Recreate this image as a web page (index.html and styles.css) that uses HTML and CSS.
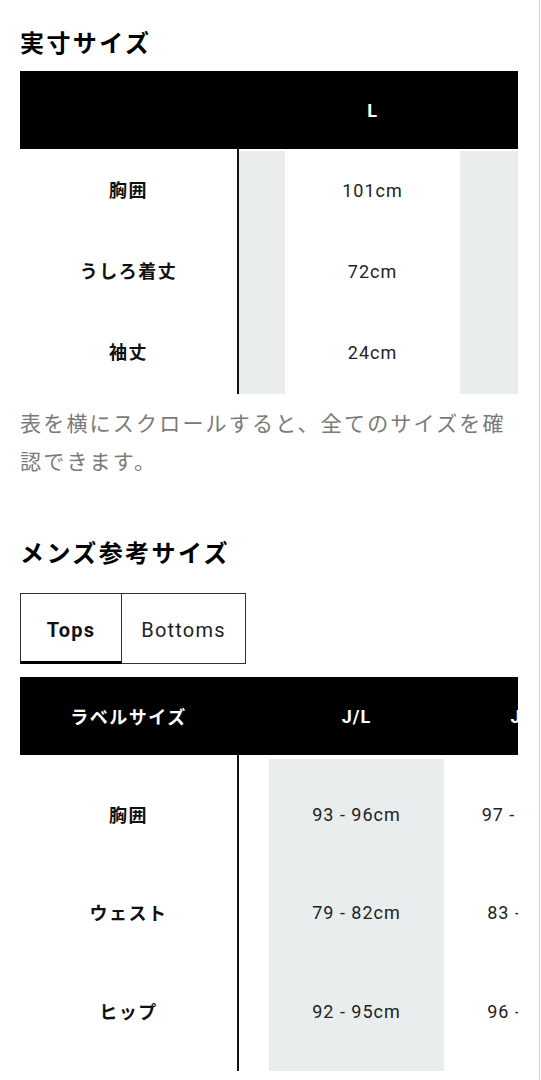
FILE: index.html
```html
<!DOCTYPE html>
<html lang="ja">
<head>
<meta charset="utf-8">
<title>サイズ</title>
<link rel="stylesheet" href="styles.css">
</head>
<body>
<div class="page">
  <h2 class="title">実寸サイズ</h2>
  <div class="stable t1">
    <div class="labels">
      <div class="head"></div>
      <div class="body">
        <div class="cell">胸囲</div>
        <div class="cell">うしろ着丈</div>
        <div class="cell">袖丈</div>
      </div>
    </div>
    <div class="viewport">
      <div class="track">
        <div class="col shade">
          <div class="head"></div>
          <div class="body">
            <div class="cell"></div>
            <div class="cell"></div>
            <div class="cell"></div>
          </div>
        </div>
        <div class="col">
          <div class="head">L</div>
          <div class="body">
            <div class="cell">101cm</div>
            <div class="cell">72cm</div>
            <div class="cell">24cm</div>
          </div>
        </div>
        <div class="col shade">
          <div class="head"></div>
          <div class="body">
            <div class="cell"></div>
            <div class="cell"></div>
            <div class="cell"></div>
          </div>
        </div>
      </div>
    </div>
  </div>
  <p class="note">表を横にスクロールすると、全てのサイズを確認できます。</p>

  <h2 class="title title2">メンズ参考サイズ</h2>
  <div class="tabs">
    <div class="tab active">Tops</div>
    <div class="tab">Bottoms</div>
  </div>
  <div class="stable t2">
    <div class="labels">
      <div class="head">ラベルサイズ</div>
      <div class="body">
        <div class="cell">胸囲</div>
        <div class="cell">ウェスト</div>
        <div class="cell">ヒップ</div>
      </div>
    </div>
    <div class="viewport">
      <div class="track">
        <div class="col">
          <div class="head"></div>
          <div class="body">
            <div class="cell"></div>
            <div class="cell"></div>
            <div class="cell"></div>
          </div>
        </div>
        <div class="col shade">
          <div class="head">J/L</div>
          <div class="body">
            <div class="cell">93 - 96cm</div>
            <div class="cell">79 - 82cm</div>
            <div class="cell">92 - 95cm</div>
          </div>
        </div>
        <div class="col">
          <div class="head">J/XL</div>
          <div class="body">
            <div class="cell">97 - 100cm</div>
            <div class="cell">83 - 86cm</div>
            <div class="cell">96 - 99cm</div>
          </div>
        </div>
      </div>
    </div>
  </div>
</div>
</body>
</html>
```

FILE: styles.css
```css
html, body {
  margin: 0;
  padding: 0;
  background: #fff;
}

body {
  font-family: "Roboto", "Noto Sans CJK JP", sans-serif;
  color: #111;
}

.page {
  box-sizing: border-box;
  width: 540px;
  min-height: 1080px;
  padding: 24px 21px 0 20px;
  border-right: 1px solid #cfcfcf;
}

.title {
  margin: 0;
  font-family: "Noto Sans CJK JP", sans-serif;
  font-weight: 700;
  font-size: 24px;
  line-height: 36px;
  letter-spacing: 2.4px;
  color: #000;
}

.title2 {
  margin-top: 55px;
}

.stable {
  display: flex;
  margin-top: 11px;
}

.labels {
  flex: 0 0 219px;
  display: flex;
  flex-direction: column;
}

.head {
  height: 78px;
  background: #000;
  color: #fff;
  display: flex;
  align-items: center;
  justify-content: center;
  font-family: "Roboto", "Noto Sans CJK JP", sans-serif;
  font-weight: 700;
  font-size: 18px;
  letter-spacing: 1px;
}

.labels .head {
  font-family: "Noto Sans CJK JP", sans-serif;
  letter-spacing: 1.5px;
  padding-right: 2px;
}

.labels .body {
  border-right: 2px solid #111;
  padding-top: 2px;
}

.labels .cell {
  font-family: "Noto Sans CJK JP", sans-serif;
  font-weight: 700;
  font-size: 18px;
  letter-spacing: 1.5px;
  color: #111;
  padding-bottom: 5px;
}

.cell {
  box-sizing: border-box;
  height: 81px;
  display: flex;
  align-items: center;
  justify-content: center;
  padding-bottom: 3px;
}

.viewport {
  flex: 1 1 auto;
  overflow: hidden;
}

.track {
  display: flex;
  margin-left: -129px;
}

.col {
  flex: 0 0 175px;
  display: flex;
  flex-direction: column;
}

.col .body {
  margin-top: 2px;
}

.col.shade .body {
  background: #e9eded;
}

.col .cell {
  font-size: 18px;
  letter-spacing: 1px;
  color: #222;
}

.note {
  margin: 9px 0 0;
  font-family: "Noto Sans CJK JP", sans-serif;
  font-size: 21px;
  line-height: 38px;
  letter-spacing: 2.2px;
  color: #7a7a7a;
}

.tabs {
  display: flex;
  margin-top: 23px;
}

.tab {
  box-sizing: border-box;
  height: 71px;
  display: flex;
  align-items: center;
  justify-content: center;
  border: 1px solid #333;
  font-size: 20px;
  letter-spacing: 1.2px;
  color: #222;
  width: 124px;
  padding-top: 2px;
}

.tab + .tab {
  border-left: none;
}

.tab.active {
  width: 102px;
  font-weight: 700;
  color: #111;
  border-bottom: 3px solid #000;
  padding-top: 4px;
}

.t2 {
  margin-top: 13px;
}

.t2 .labels .body {
  padding-top: 10px;
  padding-bottom: 10px;
}

.t2 .col .body {
  margin-top: 4px;
  padding-top: 6px;
  padding-bottom: 10px;
}

.t2 .cell {
  height: 98.5px;
  padding-bottom: 0;
}

.t2 .labels .cell {
  padding-bottom: 1px;
}

.t2 .track {
  margin-left: -145px;
}
```
